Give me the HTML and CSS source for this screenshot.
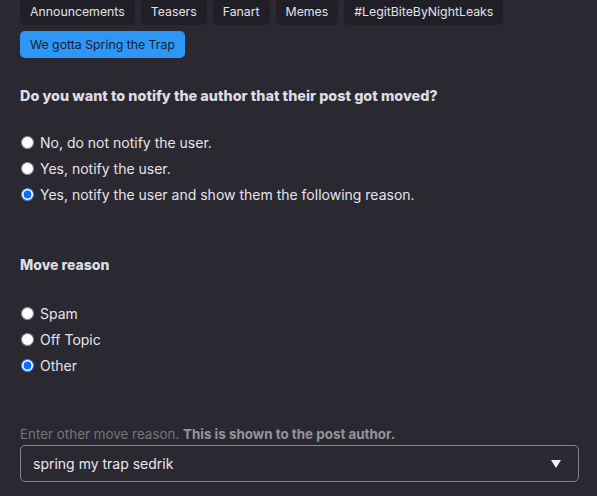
FILE: index.html
```html
<!DOCTYPE html>
<html>
<head>
<meta charset="utf-8">
<link rel="stylesheet" href="styles.css">
</head>
<body>
<div class="page">
  <div class="tags">
    <span class="tag">Announcements</span>
    <span class="tag">Teasers</span>
    <span class="tag">Fanart</span>
    <span class="tag">Memes</span>
    <span class="tag">#LegitBiteByNightLeaks</span>
    <span class="tag tag-active">We gotta Spring the Trap</span>
  </div>

  <h3 class="question">Do you want to notify the author that their post got moved?</h3>
  <div class="options options-notify">
    <label class="option"><input type="radio" name="notify"><span>No, do not notify the user.</span></label>
    <label class="option"><input type="radio" name="notify"><span>Yes, notify the user.</span></label>
    <label class="option"><input type="radio" name="notify" checked><span>Yes, notify the user and show them the following reason.</span></label>
  </div>

  <h3 class="question question-reason">Move reason</h3>
  <div class="options options-reason">
    <label class="option"><input type="radio" name="reason"><span>Spam</span></label>
    <label class="option"><input type="radio" name="reason"><span>Off Topic</span></label>
    <label class="option"><input type="radio" name="reason" checked><span>Other</span></label>
  </div>

  <div class="help">Enter other move reason. <strong>This is shown to the post author.</strong></div>
  <div class="select">
    <span class="select-value">spring my trap sedrik</span>
    <span class="select-arrow"></span>
  </div>
</div>
</body>
</html>
```

FILE: styles.css
```css
html, body {
  margin: 0;
  padding: 0;
  background: #2a2831;
}
body {
  font-family: Inter, "Noto Sans", sans-serif;
  color: #e4e2e8;
  overflow: hidden;
}
.page {
  padding: 0 18px 0 20px;
}
.tags {
  display: flex;
  flex-wrap: wrap;
  gap: 6px;
  margin-top: -2px;
}
.tag {
  display: inline-flex;
  align-items: center;
  height: 27px;
  padding: 0 10px;
  background: #201f27;
  border-radius: 5px;
  font-size: 12.3px;
  color: #e4e2e8;
}
.tag-active {
  background: #2d97f7;
  color: #1b1d2c;
}
.question {
  margin: 29px 0 0;
  font-size: 14.4px;
  line-height: 18px;
  font-weight: 800;
  color: #dedce2;
}
.question-reason {
  margin-top: 49px;
  font-size: 14px;
}
.options {
  display: flex;
  flex-direction: column;
  margin-top: 24px;
}
.options-reason {
  margin-top: 26px;
}
.option {
  display: flex;
  align-items: center;
  height: 26px;
  font-size: 14px;
  color: #e6e4ea;
}
.option input {
  width: 13px;
  height: 13px;
  margin: 0 6px 0 1px;
  accent-color: #0a6cff;
}
.help {
  margin-top: 48px;
  font-size: 13.4px;
  line-height: 16px;
  color: #76747d;
}
.help strong {
  color: #96949c;
  font-weight: 700;
}
.select {
  margin-top: 3px;
  height: 37px;
  box-sizing: border-box;
  border: 1px solid #85838c;
  border-radius: 5px;
  display: flex;
  align-items: center;
  justify-content: space-between;
  padding: 0 17px 0 12px;
}
.select-value {
  font-size: 14px;
  color: #ebe9ee;
}
.select-arrow {
  width: 0;
  height: 0;
  border-left: 5px solid transparent;
  border-right: 5px solid transparent;
  border-top: 8px solid #f2f0f5;
}
```
